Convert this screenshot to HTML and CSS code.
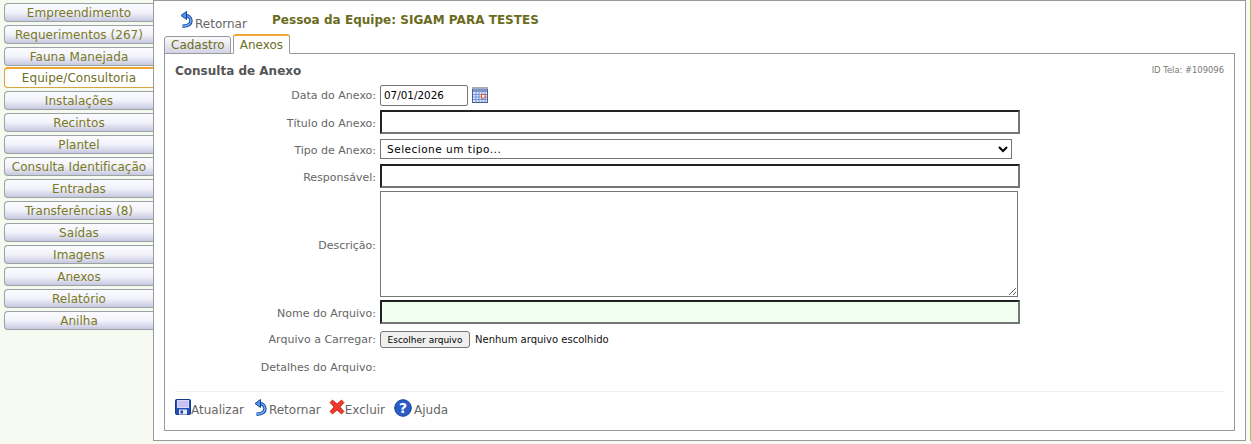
FILE: index.html
```html
<!DOCTYPE html>
<html lang="pt-BR">
<head>
<meta charset="utf-8">
<title>Consulta de Anexo</title>
<link rel="stylesheet" href="styles.css">
</head>
<body>
<svg class="defs" width="0" height="0" aria-hidden="true">
  <defs>
    <symbol id="back" viewBox="0 0 13 17">
      <path d="M5 4.5 C9 4.5 11 7 11 9.8 C11 13 7.5 15 2.5 15.3" fill="none" stroke="#14439f" stroke-width="3.4" stroke-linecap="butt"/>
      <path d="M5 4.5 C9 4.5 11 7 11 9.8 C11 13 7.5 15 2.5 15.3" fill="none" stroke="#6fb0f2" stroke-width="1.5"/>
      <path d="M6.5 0.5 L1 4.5 L6.5 8.5 Z" fill="#4f96e8" stroke="#14439f" stroke-width="1" stroke-linejoin="round"/>
    </symbol>
  </defs>
</svg>
<div class="page">
  <nav class="side">
    <a class="item">Empreendimento</a>
    <a class="item">Requerimentos (267)</a>
    <a class="item">Fauna Manejada</a>
    <a class="item active">Equipe/Consultoria</a>
    <a class="item">Instalações</a>
    <a class="item">Recintos</a>
    <a class="item">Plantel</a>
    <a class="item">Consulta Identificação</a>
    <a class="item">Entradas</a>
    <a class="item">Transferências (8)</a>
    <a class="item">Saídas</a>
    <a class="item">Imagens</a>
    <a class="item">Anexos</a>
    <a class="item">Relatório</a>
    <a class="item">Anilha</a>
  </nav>
  <main class="main">
    <header class="top">
      <a class="link back-top"><svg class="ic-back"><use href="#back"/></svg><span>Retornar</span></a>
      <h1 class="title">Pessoa da Equipe: SIGAM PARA TESTES</h1>
    </header>
    <div class="tabs">
      <a class="tab tab-off">Cadastro</a>
      <a class="tab tab-on">Anexos</a>
    </div>
    <section class="panel">
      <div class="panel-head">
        <h2 class="panel-title">Consulta de Anexo</h2>
        <span class="screen-id">ID Tela: #109096</span>
      </div>
      <div class="form">
        <div class="row r-date">
          <label class="lbl">Data do Anexo:</label>
          <input class="date" type="text" value="07/01/2026">
          <svg class="cal" viewBox="0 0 16 16" aria-hidden="true">
            <rect x="0.5" y="2" width="15" height="13.5" fill="#dfe7f7" stroke="#4c5f8f"/>
            <path d="M0.5 0.5H15.5" stroke="#555" stroke-width="1" stroke-dasharray="1 1"/>
            <rect x="1" y="2" width="14" height="3" fill="#7f93c4"/>
            <path d="M1 7.5H15M1 10H15M1 12.5H15M4 5V15M7 5V15M10 5V15M13 5V15" stroke="#6f93dc" stroke-width="1"/>
            <rect x="9.5" y="7.5" width="3.5" height="3.5" fill="#fff" stroke="#e8562f"/>
          </svg>
        </div>
        <div class="row r-text"><label class="lbl">Título do Anexo:</label><input class="txt" type="text"></div>
        <div class="row r-sel">
          <label class="lbl">Tipo de Anexo:</label>
          <select class="sel"><option>Selecione um tipo...</option></select>
        </div>
        <div class="row r-text"><label class="lbl">Responsável:</label><input class="txt" type="text"></div>
        <div class="row r-area"><label class="lbl">Descrição:</label><textarea class="area"></textarea></div>
        <div class="row r-text"><label class="lbl">Nome do Arquivo:</label><input class="txt green" type="text"></div>
        <div class="row r-file"><label class="lbl">Arquivo a Carregar:</label><button class="file-btn" type="button">Escolher arquivo</button><span class="file-name">Nenhum arquivo escolhido</span></div>
        <div class="row r-det"><label class="lbl">Detalhes do Arquivo:</label></div>
      </div>
      <footer class="actions">
        <a class="link act-save">
          <svg class="ic-save" viewBox="0 0 16 16" aria-hidden="true">
            <rect x="0.5" y="0.5" width="15" height="15" rx="1" fill="#1f50b8" stroke="#16388c"/>
            <rect x="2" y="1" width="12" height="8" fill="#d9d6f7"/>
            <path d="M3 3H13M3 5H13M3 7H13" stroke="#b7a8ef" stroke-width="1"/>
            <rect x="4" y="10.5" width="8" height="5" fill="#e8ecfa"/>
            <rect x="5.5" y="11.5" width="2.5" height="3" fill="#1f3f94"/>
          </svg><span>Atualizar</span></a>
        <a class="link act-back"><svg class="ic-back"><use href="#back"/></svg><span>Retornar</span></a>
        <a class="link act-del">
          <svg class="ic-x" viewBox="0 0 16 16" aria-hidden="true">
            <path d="M1 3.5 L3.5 1 L8 5 L12.5 1 L15 3.5 L11 8 L15 12.5 L12.5 15 L8 11 L3.5 15 L1 12.5 L5 8 Z" fill="#ee3a2a" stroke="#b8281c" stroke-width="0.8" stroke-linejoin="round"/>
          </svg><span>Excluir</span></a>
        <a class="link act-help">
          <svg class="ic-help" viewBox="0 0 18 18" aria-hidden="true">
            <circle cx="9" cy="9" r="8.3" fill="#2a5cc8" stroke="#173f96"/>
            <text x="9" y="13.5" text-anchor="middle" class="q">?</text>
          </svg><span>Ajuda</span></a>
      </footer>
    </section>
  </main>
  <div class="edge"></div>
</div>
</body>
</html>
```
FILE: styles.css
```css
* { box-sizing: border-box; }
html, body { margin: 0; padding: 0; height: 444px; overflow: hidden; }
body {
  background: #f7faf0;
  font-family: "DejaVu Sans", Verdana, sans-serif;
  font-size: 12px;
  color: #5f5f5f;
}
.defs { display: block; height: 0; }
.page { display: flex; height: 444px; padding-bottom: 3px; }

.side { width: 153px; flex: none; padding-top: 3px; display: flex; flex-direction: column; gap: 3px; padding-left: 4px; }
.item {
  display: block;
  height: 19px;
  line-height: 19px;
  text-align: center;
  color: #7a7a1e;
  letter-spacing: 0.05px;
  white-space: nowrap;
  border: 1px solid #9aa3a3;
  border-right: 0;
  border-radius: 4px 0 0 4px;
  background: linear-gradient(#fbfbff 0%, #f2f2fb 50%, #c8c9e0 100%);
}
.item.active {
  height: 21px;
  margin-top: -2px;
  background: #fff;
  border-color: #d9a441;
  border-top: 2px solid #f0a830;
  color: #6f6f1e;
  line-height: 19px;
}

.main {
  width: 1093px;
  flex: none;
  background: #fff;
  border: 1px solid #9a9a9a;
  padding: 0 10px 0 10px;
  display: flex;
  flex-direction: column;
}
.top { display: flex; height: 32px; align-items: flex-start; padding-top: 10px; padding-left: 16px; }
.link { display: inline-flex; align-items: flex-start; color: #666; }
.link span { align-self: flex-end; }
.back-top { width: 92px; height: 20px; }
.ic-back { width: 13px; height: 17px; display: block; flex: none; margin-right: 2px; }
.title { margin: 0; font-size: 12px; font-weight: bold; color: #6b6b1e; letter-spacing: 0.03px; line-height: 16px; padding-top: 1px; }

.tabs { display: flex; gap: 2px; height: 21px; align-items: flex-end; position: relative; z-index: 1; margin-bottom: -1px; }
.tab {
  height: 18px;
  padding: 0 6px;
  line-height: 17px;
  color: #6f6f1e;
  border: 1px solid #9a9a9a;
  border-radius: 3px 3px 0 0;
  background: linear-gradient(#fbfbff, #d2d3e6);
}
.tab-off { padding-right: 5px; }
.tab-on {
  height: 20px;
  padding-right: 6px;
  background: #fff;
  border-top: 2px solid #f0a830;
  border-bottom-color: #fff;
  line-height: 18px;
}

.panel { flex: none; height: 378px; border: 1px solid #9a9a9a; padding: 0 10px 0 10px; background: #fff; }
.panel-head { display: flex; justify-content: space-between; height: 30px; padding-top: 9px; }
.panel-title { margin: 0; font-size: 12px; font-weight: bold; color: #555; line-height: 16px; }
.screen-id { font-size: 8.4px; color: #777; padding-top: 2px; }

.form { display: flex; flex-direction: column; }
.row { display: flex; align-items: center; }
.lbl { width: 205px; flex: none; text-align: right; padding-right: 4px; color: #666; white-space: nowrap; font-size: 11px; }
.r-text .lbl, .r-sel .lbl, .r-area .lbl { padding-top: 2px; }
.r-date { height: 24px; padding-bottom: 2px; }
.date { width: 88px; height: 21px; border: 1px solid #767676; border-radius: 2px; padding: 0 3px; font: 10.4px "DejaVu Sans", sans-serif; color: #000; }
.cal { width: 16px; height: 16px; margin-left: 4px; display: block; }
.r-text { height: 28px; }
.txt { width: 640px; height: 24px; border: 2px solid; border-color: #222 #767676 #767676 #222; padding: 1px 2px; background: #fff; }
.green { background: #f0fff0; }
.r-sel { height: 26px; }
.sel { width: 632px; height: 20px; font: 10.5px "DejaVu Sans", sans-serif; letter-spacing: 0.5px; color: #000; background: #fff; border: 1px solid #767676; border-radius: 0; padding-left: 2px; }
.r-area { height: 108px; }
.area { width: 638px; height: 106px; border: 1px solid #767676; background: #fff; padding: 2px; }
.r-file { height: 27px; }
.file-btn { width: 90px; height: 17px; padding: 0; border: 1px solid #767676; border-radius: 3px; background: #efefef; color: #000; font: 9px "DejaVu Sans", sans-serif; }
.file-name { margin-left: 5px; font-size: 10px; color: #111; }
.r-det { height: 28px; }

.actions { margin-top: 10px; border-top: 1px solid #f0f0e6; height: 40px; display: flex; align-items: flex-start; padding-top: 7px; gap: 10px; }
.actions .link { height: 18px; }
.ic-save { width: 16px; height: 16px; display: block; }
.ic-x { width: 16px; height: 16px; display: block; }
.act-del { margin-left: -2px; }
.act-help { margin-left: -1px; }
.ic-help { width: 18px; height: 18px; display: block; margin-right: 2px; }
.q { font: bold 14px "DejaVu Sans", sans-serif; fill: #fff; }
.edge { flex: none; width: 2px; margin-left: 4px; border-left: 1px solid #a6c858; }
```
